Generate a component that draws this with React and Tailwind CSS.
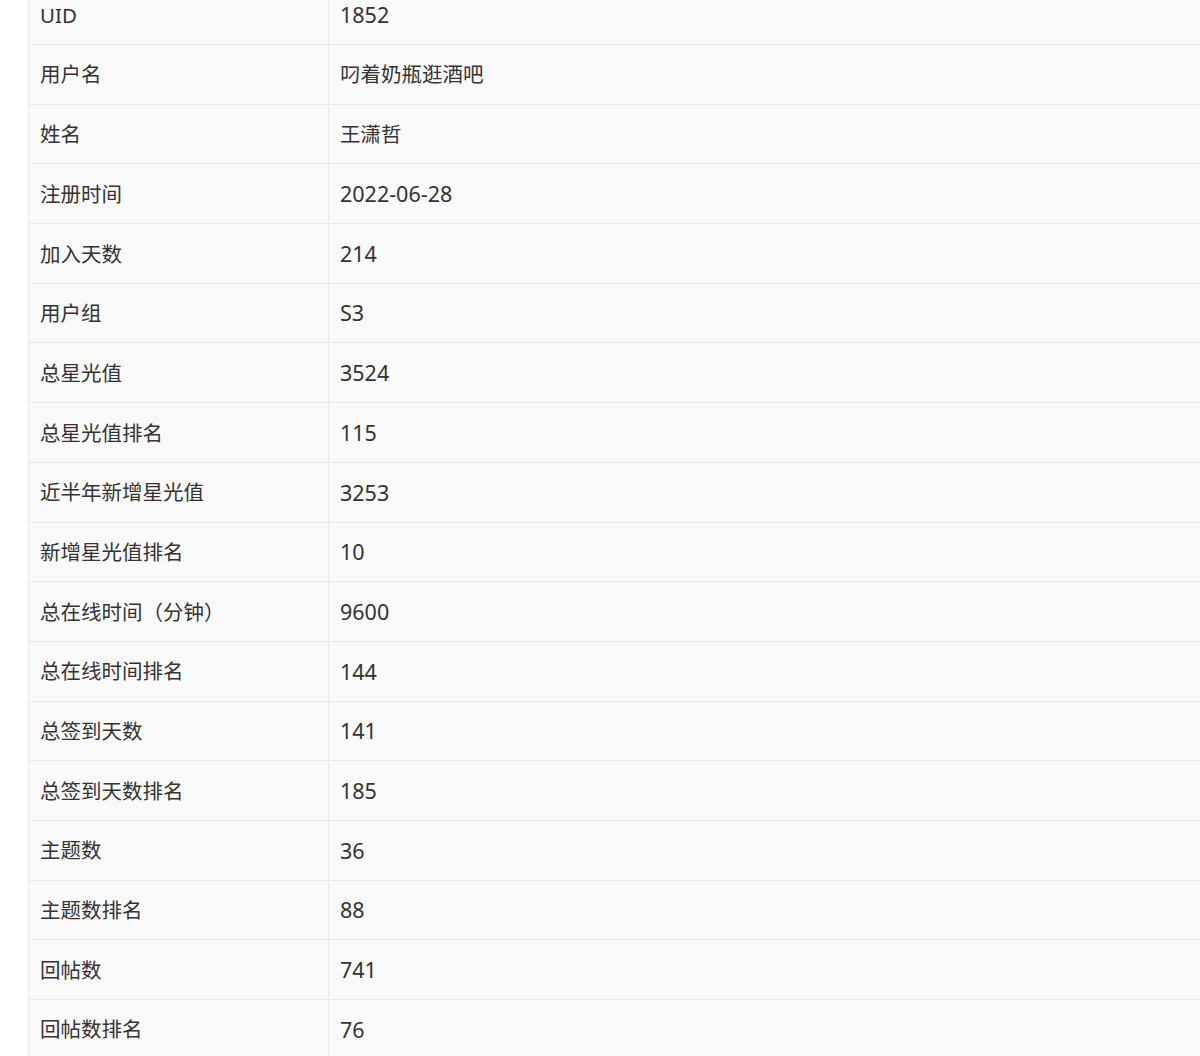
import React from 'react';

const rows = [
  ['UID', '1852'],
  ['用户名', '叼着奶瓶逛酒吧'],
  ['姓名', '王潇哲'],
  ['注册时间', '2022-06-28'],
  ['加入天数', '214'],
  ['用户组', 'S3'],
  ['总星光值', '3524'],
  ['总星光值排名', '115'],
  ['近半年新增星光值', '3253'],
  ['新增星光值排名', '10'],
  ['总在线时间（分钟）', '9600'],
  ['总在线时间排名', '144'],
  ['总签到天数', '141'],
  ['总签到天数排名', '185'],
  ['主题数', '36'],
  ['主题数排名', '88'],
  ['回帖数', '741'],
  ['回帖数排名', '76'],
];

const ProfileTable = () => {
  return (
    <div className="h-[1056px] overflow-hidden bg-white pl-[28px]">
      <div className="-mt-[14.7px] border-l border-[#e9e9e9] bg-[#f9f9f9] text-[20.5px] text-[#333]">
        {rows.map(([label, value]) => (
          <div key={label} className="grid grid-cols-[300px_1fr] h-[59.69px] border-b border-[#e9e9e9]">
            <div className="flex items-center px-[11px] pt-[1px] border-r border-[#e9e9e9]">{label}</div>
            <div className={/^[\x00-\x7f]+$/.test(value) ? 'flex items-center px-[11px] pt-[1px] text-[21.5px]' : 'flex items-center px-[11px] pt-[1px]'}>
              {value}
            </div>
          </div>
        ))}
      </div>
    </div>
  );
};

export default function App() {
  return (
    <div style={{ fontFamily: '"Noto Sans", "Noto Sans CJK SC", sans-serif' }}>
      <ProfileTable />
    </div>
  );
}
